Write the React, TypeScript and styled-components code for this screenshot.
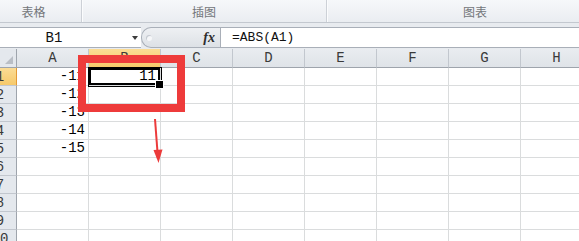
import styled, { createGlobalStyle } from 'styled-components'

const columns = ['A', 'B', 'C', 'D', 'E', 'F', 'G', 'H']
const rowNumbers = [1, 2, 3, 4, 5, 6, 7, 8, 9, 10]
const valuesA: Record<number, string> = {
  1: '-11',
  2: '-12',
  3: '-13',
  4: '-14',
  5: '-15',
}

const GlobalStyle = createGlobalStyle`
  html, body {
    margin: 0;
    padding: 0;
    background: #ffffff;
    overflow: hidden;
  }
  * {
    box-sizing: border-box;
  }
`

export default function App() {
  return (
    <Window>
      <GlobalStyle />
      <RibbonBar>
        <RibbonGroup $width={82} $padRight={14}>
          <GroupLabel>表格</GroupLabel>
        </RibbonGroup>
        <RibbonGroup $width={245}>
          <GroupLabel>插图</GroupLabel>
        </RibbonGroup>
        <RibbonGroup $width={297}>
          <GroupLabel>图表</GroupLabel>
        </RibbonGroup>
      </RibbonBar>

      <FormulaBar>
        <NameBox>
          <NameText>B1</NameText>
          <DropArrow />
        </NameBox>
        <FxBox>
          <Handle />
          <FxLabel>fx</FxLabel>
        </FxBox>
        <FormulaInput>=ABS(A1)</FormulaInput>
      </FormulaBar>

      <SheetGrid>
        <Corner>
          <CornerTriangle />
        </Corner>
        {columns.map((col) => (
          <ColHead key={col} $active={col === 'B'}>
            {col}
          </ColHead>
        ))}
        {rowNumbers.map((row) => (
          <Row key={row}>
            <RowHead $active={row === 1}>
              <span>{row}</span>
            </RowHead>
            {columns.map((col) => (
              <Cell key={col} $selected={col === 'B' && row === 1}>
                {col === 'A' ? valuesA[row] : col === 'B' && row === 1 ? '11' : ''}
              </Cell>
            ))}
          </Row>
        ))}
      </SheetGrid>

      <RedFrame />
      <ArrowMark width="20" height="60" viewBox="0 0 20 60">
        <line x1="6" y1="2" x2="9" y2="42" stroke="#ec3b3b" strokeWidth="2" />
        <polygon points="4.5,33 13.5,32.5 9.5,46" fill="#ec3b3b" />
      </ArrowMark>
    </Window>
  )
}

const Window = styled.div`
  position: relative;
  width: 579px;
  height: 241px;
  overflow: hidden;
  background: #ffffff;
`
const RibbonBar = styled.div`
  display: flex;
  height: 23px;
  background: linear-gradient(#f6f8fa, #eaedf1);
  border-bottom: 1px solid #c3c8cf;
`
const RibbonGroup = styled.div<{ $width: number; $padRight?: number }>`
  display: flex;
  justify-content: center;
  align-items: center;
  flex: none;
  width: ${(p) => p.$width}px;
  padding-right: ${(p) => p.$padRight || 0}px;
  border-right: 1px solid #cdd1d7;
  box-shadow: 1px 0 0 #fbfcfd;
`
const GroupLabel = styled.span`
  font-family: 'Noto Sans CJK SC', 'Noto Sans', sans-serif;
  font-size: 12px;
  color: #73767a;
  line-height: 1;
  margin-top: 1px;
`
const FormulaBar = styled.div`
  display: flex;
  height: 26px;
  padding: 4px 0 1px 0;
  background: #e8ebef;
`
const NameBox = styled.div`
  display: flex;
  align-items: center;
  width: 141px;
  height: 21px;
  background: #ffffff;
  border-top: 1px solid #a9afb8;
  border-bottom: 1px solid #a9afb8;
`
const NameText = styled.span`
  width: 108px;
  text-align: center;
  font-family: 'Liberation Mono', monospace;
  font-size: 14px;
  color: #111111;
`
const DropArrow = styled.span`
  margin-left: 24px;
  width: 0;
  height: 0;
  border-left: 3px solid transparent;
  border-right: 3px solid transparent;
  border-top: 4px solid #3d3d3d;
`
const FxBox = styled.div`
  display: flex;
  align-items: center;
  width: 79px;
  height: 21px;
  border: 1px solid #aab0b9;
  border-right: none;
  border-radius: 10px 0 0 10px;
  background: linear-gradient(#eef0f3, #dde1e6);
`
const Handle = styled.span`
  width: 6px;
  height: 6px;
  margin-left: 4px;
  border-radius: 50%;
  background: #f6f7f9;
  box-shadow: inset 1px 1px 0 #c4c9d0;
`
const FxLabel = styled.span`
  margin-left: auto;
  margin-right: 5px;
  font-family: 'Liberation Serif', serif;
  font-style: italic;
  font-weight: bold;
  font-size: 14px;
  color: #2d2d2d;
`
const FormulaInput = styled.div`
  flex: 1;
  display: flex;
  align-items: center;
  height: 21px;
  padding-left: 11px;
  background: #ffffff;
  border: 1px solid #a9afb8;
  border-right: none;
  font-family: 'Liberation Mono', monospace;
  font-size: 13px;
  color: #111111;
`
const SheetGrid = styled.div`
  display: grid;
  grid-template-columns: 17px repeat(8, 72px);
  grid-template-rows: 19px repeat(10, 18px);
  width: 593px;
`
const Row = styled.div`
  display: contents;
`
const Corner = styled.div`
  position: relative;
  background: #e4e8ed;
  border-right: 1px solid #9ea4ac;
  border-bottom: 1px solid #9ea4ac;
`
const CornerTriangle = styled.span`
  position: absolute;
  right: 3px;
  bottom: 3px;
  width: 0;
  height: 0;
  border-left: 8px solid transparent;
  border-bottom: 8px solid #b9bec5;
`
const ColHead = styled.div<{ $active?: boolean }>`
  display: flex;
  justify-content: center;
  align-items: center;
  background: ${(p) =>
    p.$active
      ? 'linear-gradient(#fbdc95, #f6c96a)'
      : 'linear-gradient(#e9ecf0, #dfe3e8)'};
  border-right: 1px solid #c2c7ce;
  border-bottom: 1px solid ${(p) => (p.$active ? '#e39a36' : '#9ea4ac')};
  font-family: 'Liberation Mono', monospace;
  font-size: 14px;
  color: #3a3a3a;
`
const RowHead = styled.div<{ $active?: boolean }>`
  display: flex;
  justify-content: center;
  align-items: center;
  padding-right: 16px;
  overflow: hidden;
  background: ${(p) =>
    p.$active ? 'linear-gradient(#fbdc95, #f6c96a)' : '#e4e8ed'};
  border-right: 1px solid ${(p) => (p.$active ? '#e39a36' : '#9ea4ac')};
  border-bottom: 1px solid #c2c7ce;
  font-family: 'Liberation Mono', monospace;
  font-size: 14px;
  color: #3a3a3a;
  span {
    flex: none;
  }
`
const Cell = styled.div<{ $selected?: boolean }>`
  position: relative;
  display: flex;
  justify-content: flex-end;
  align-items: flex-end;
  padding: 0 3px 0 0;
  border-right: 1px solid #dadcdd;
  border-bottom: 1px solid #dadcdd;
  font-family: 'Liberation Mono', monospace;
  font-size: 14px;
  line-height: 17px;
  color: #000000;
  ${(p) =>
    p.$selected &&
    `
    padding-right: 4px;
    box-shadow: 0 0 0 1px #000, inset 0 0 0 2px #000;
    z-index: 1;
    &::after {
      content: '';
      position: absolute;
      right: -4px;
      bottom: -4px;
      width: 7px;
      height: 7px;
      background: #000;
      border: 1px solid #fff;
    }
  `}
`
const RedFrame = styled.div`
  position: absolute;
  left: 78px;
  top: 55px;
  width: 107px;
  height: 57px;
  border: 8px solid #ee3b3b;
  z-index: 2;
`
const ArrowMark = styled.svg`
  position: absolute;
  left: 149px;
  top: 117px;
  z-index: 2;
`
